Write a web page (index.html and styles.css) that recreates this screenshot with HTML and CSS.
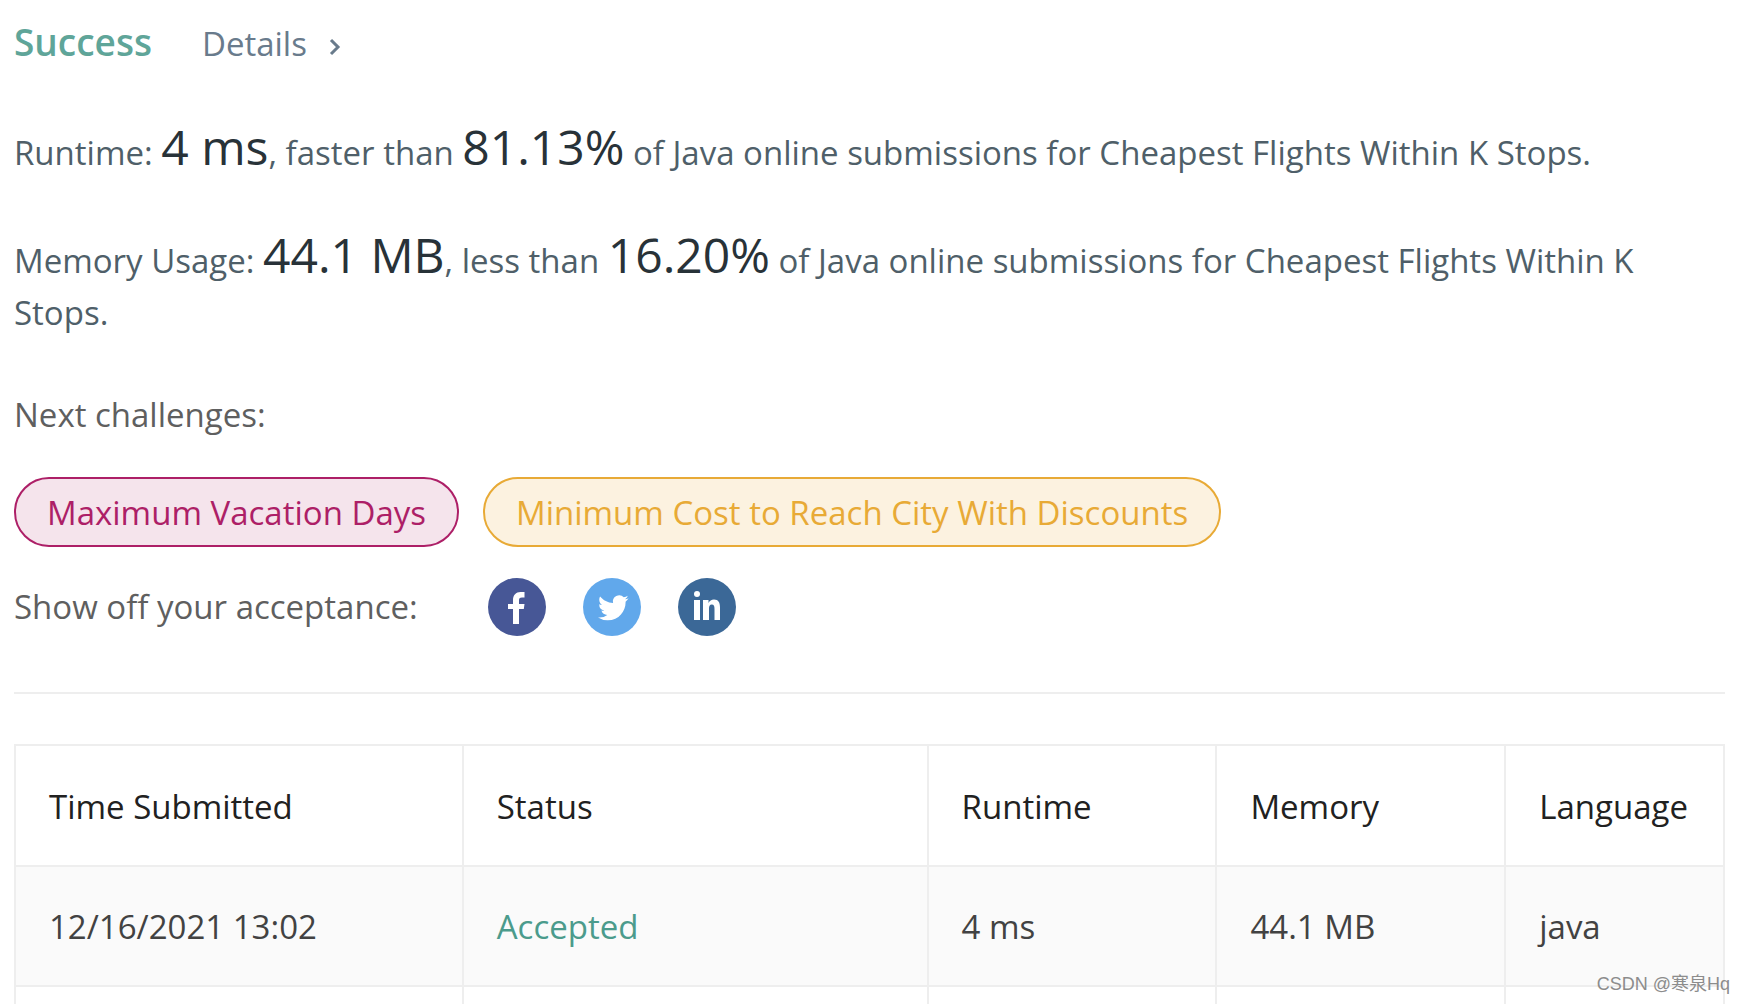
FILE: index.html
```html
<!DOCTYPE html>
<html lang="en">
<head>
<meta charset="utf-8">
<title>Submission result</title>
<link rel="stylesheet" href="styles.css">
</head>
<body>
<main class="result">
  <header class="result-head">
    <h1 class="verdict">Success</h1>
    <a class="details" href="#details">Details
      <svg class="chevron" viewBox="0 0 12 18" aria-hidden="true"><path d="M2 2l7 7-7 7"/></svg>
    </a>
  </header>

  <section class="stats">
    <p>Runtime: <span class="figure">4 ms</span>, faster than <span class="figure">81.13%</span> of Java online submissions for Cheapest Flights Within K Stops.</p>
    <p>Memory Usage: <span class="figure">44.1 MB</span>, less than <span class="figure">16.20%</span> of Java online submissions for Cheapest Flights Within K Stops.</p>
  </section>

  <section class="next">
    <h2 class="label">Next challenges:</h2>
    <div class="pills">
      <a class="pill pill-hard" href="#vacation">Maximum Vacation Days</a>
      <a class="pill pill-medium" href="#discounts">Minimum Cost to Reach City With Discounts</a>
    </div>
  </section>

  <section class="share">
    <h2 class="label">Show off your acceptance:</h2>
    <div class="share-links">
      <a href="#facebook" aria-label="Facebook"><svg class="social" viewBox="0 0 58 58"><circle cx="29" cy="29" r="29" fill="#475796"/><path fill="#fff" d="M25 46V31h-5v-5h5v-4c0-5 3-8 7.500-8H36.500v5.500H34c-2.500 0-3 1-3 3V26h5.500l-.7 5H31v15z"/></svg></a>
      <a href="#twitter" aria-label="Twitter"><svg class="social" viewBox="0 0 58 58"><circle cx="29" cy="29" r="29" fill="#61a8eb"/><path fill="#fff" transform="translate(15 14.500) scale(1.280)" d="M23.950 4.570a10 10 0 0 1-2.820.77 4.960 4.960 0 0 0 2.160-2.720c-.95.55-2 .95-3.130 1.180a4.920 4.920 0 0 0-8.380 4.480C7.690 8.090 4.070 6.130 1.640 3.160a4.820 4.820 0 0 0-.67 2.480c0 1.710.87 3.210 2.190 4.100a4.900 4.900 0 0 1-2.230-.62v.06a4.920 4.920 0 0 0 3.950 4.830 5 5 0 0 1-2.210.08 4.940 4.940 0 0 0 4.600 3.420A9.870 9.870 0 0 1 0 19.540a13.990 13.990 0 0 0 7.550 2.210c9.050 0 14-7.500 14-13.980 0-.21 0-.42-.02-.63a9.940 9.940 0 0 0 2.420-2.570z"/></svg></a>
      <a href="#linkedin" aria-label="LinkedIn"><svg class="social" viewBox="0 0 58 58"><circle cx="29" cy="29" r="29" fill="#3b6897"/><g fill="#fff"><circle cx="19" cy="16" r="3"/><path d="M16 22h6v20h-6zM25 22h5.500v3c1-2 3-3.500 5.500-3.500 4.500 0 6 3 6 8V42h-5.500V31c0-3-.5-4.500-2.700-4.500S31 28 31 31v11h-6z"/></g></svg></a>
    </div>
  </section>

  <hr class="rule">

  <table class="submissions">
    <colgroup><col class="col-time"><col class="col-status"><col class="col-runtime"><col class="col-memory"><col class="col-language"></colgroup>
    <thead>
      <tr><th scope="col">Time Submitted</th><th scope="col">Status</th><th scope="col">Runtime</th><th scope="col">Memory</th><th scope="col">Language</th></tr>
    </thead>
    <tbody>
      <tr><td>12/16/2021 13:02</td><td><a class="accepted" href="#submission">Accepted</a></td><td>4 ms</td><td>44.1 MB</td><td>java</td></tr>
      <tr><td></td><td></td><td></td><td></td><td></td></tr>
    </tbody>
  </table>
</main>
<div class="watermark">CSDN @寒泉Hq</div>
</body>
</html>
```
FILE: styles.css
```css
* {
  box-sizing: border-box;
}

html {
  height: 100%;
  overflow: hidden;
}

body {
  height: 100%;
  margin: 0;
  overflow: hidden;
  background: #fff;
  color: #424242;
  font: 33px/52px "Open Sans", "Noto Sans", sans-serif;
}

a {
  color: inherit;
  text-decoration: none;
}

h1,
h2,
p {
  margin: 0;
  font-weight: 400;
}

.result {
  padding: 16px 20px 0 14px;
}

.result-head {
  display: flex;
  align-items: baseline;
  gap: 50px;
  margin-bottom: 51px;
}

.verdict {
  color: #5fa599;
  font-size: 37px;
  font-weight: 600;
  line-height: 52px;
}

.details {
  display: flex;
  align-items: center;
  gap: 22px;
  color: #697b8c;
}

.chevron {
  width: 12px;
  height: 18px;
  margin-top: 6px;
  fill: none;
  stroke: currentColor;
  stroke-width: 3;
}

.stats {
  display: grid;
  gap: 50px;
  margin-bottom: 50px;
  color: #4f5f69;
}

.figure {
  color: #283238;
  font-size: 48px;
}

.label {
  color: #5f5f5f;
  font-size: 33px;
}

.pills {
  display: flex;
  gap: 24px;
  margin: 36px 0 31px;
}

.pill {
  padding: 8px 31px 6px;
  border: 2px solid;
  border-radius: 35px;
}

.pill-hard {
  color: #ad1f67;
  background: #f5e4ec;
}

.pill-medium {
  color: #e8aa36;
  background: #fcf2e0;
}

.share {
  display: flex;
  align-items: center;
  gap: 70px;
}

.share-links {
  display: flex;
  gap: 37px;
}

.social {
  display: block;
  width: 58px;
  height: 58px;
}

.rule {
  height: 2px;
  margin: 56px 0 50px;
  border: 0;
  background: #eee;
}

.submissions {
  width: 100%;
  table-layout: fixed;
  border-collapse: collapse;
}

.col-time {
  width: 26.2%;
}

.col-status {
  width: 27.2%;
}

.col-runtime,
.col-memory {
  width: 16.9%;
}

.submissions th,
.submissions td {
  height: 120px;
  padding: 2px 33px 0;
  border: 2px solid #eee;
  font-weight: 400;
  text-align: left;
}

.submissions th {
  height: 121px;
  color: #212121;
}

.submissions tbody tr:nth-child(odd) {
  background: #fafafa;
}

.accepted {
  color: #4b9b8c;
}

.watermark {
  position: absolute;
  right: 15px;
  bottom: 7px;
  color: #8c8c8c;
  font: 18px/26px "Liberation Sans", "Noto Sans CJK SC", sans-serif;
}
```
